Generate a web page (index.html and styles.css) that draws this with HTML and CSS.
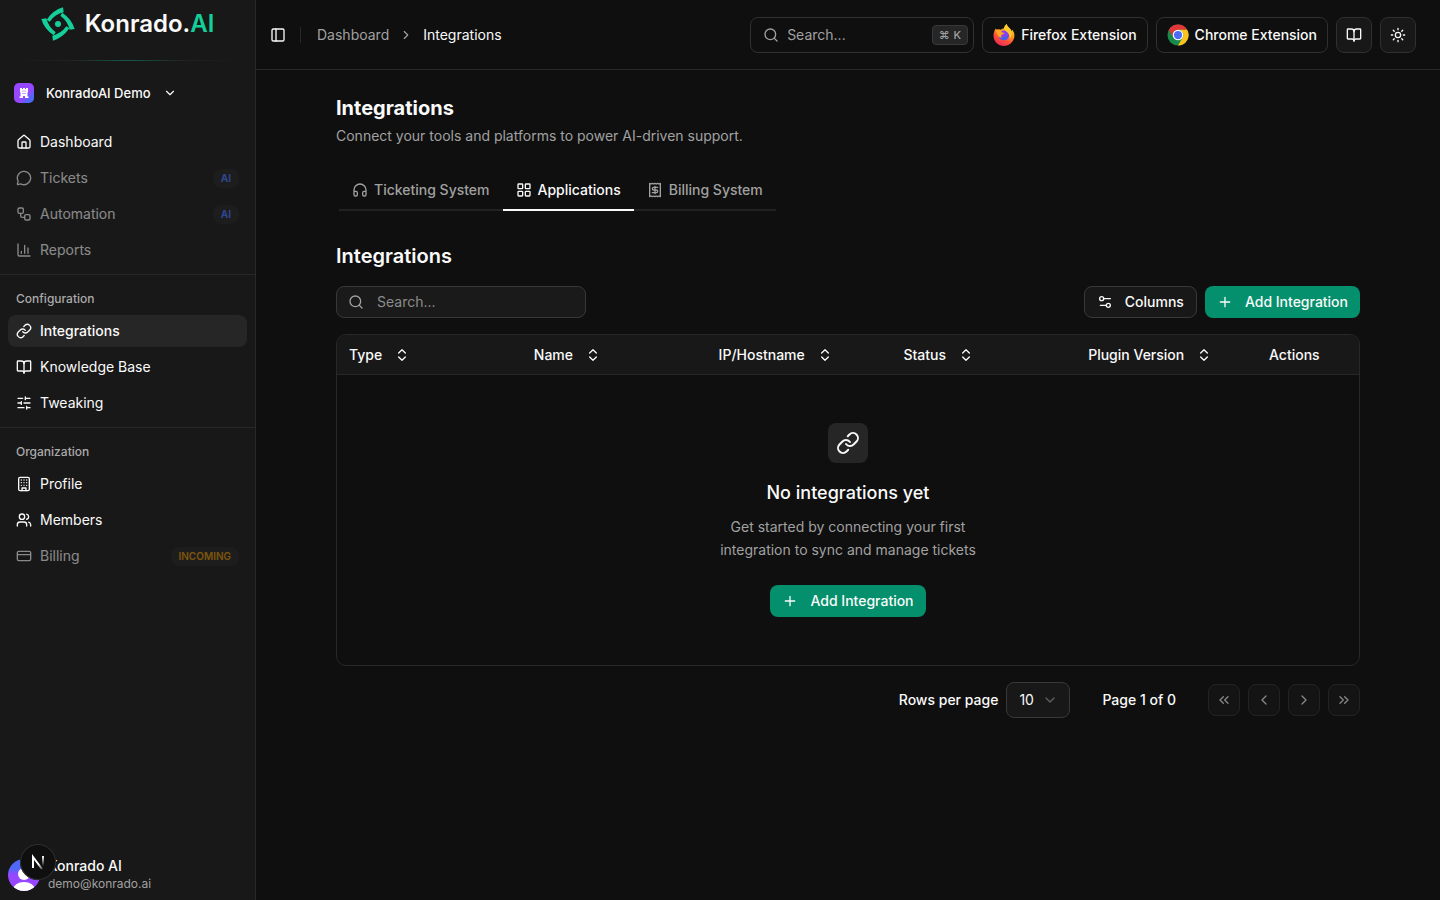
FILE: index.html
```html
<!DOCTYPE html>
<html lang="en">
<head>
<meta charset="utf-8">
<meta name="viewport" content="width=device-width, initial-scale=1">
<title>Integrations - Konrado.AI</title>
<link rel="stylesheet" href="styles.css">
</head>
<body>
<svg class="sprite" aria-hidden="true">
  <symbol id="i-link" viewBox="0 0 24 24"><path d="M10 13a5 5 0 0 0 7.54.54l3-3a5 5 0 0 0-7.07-7.07l-1.72 1.71"/><path d="M14 11a5 5 0 0 0-7.54-.54l-3 3a5 5 0 0 0 7.07 7.07l1.71-1.71"/></symbol>
  <symbol id="i-book" viewBox="0 0 24 24"><path d="M12 7v14"/><path d="M3 18a1 1 0 0 1-1-1V4a1 1 0 0 1 1-1h5a4 4 0 0 1 4 4 4 4 0 0 1 4-4h5a1 1 0 0 1 1 1v13a1 1 0 0 1-1 1h-6a3 3 0 0 0-3 3 3 3 0 0 0-3-3z"/></symbol>
  <symbol id="i-search" viewBox="0 0 24 24"><circle cx="11" cy="11" r="8"/><path d="m21 21-4.3-4.3"/></symbol>
  <symbol id="i-plus" viewBox="0 0 24 24"><path d="M5 12h14M12 5v14"/></symbol>
  <symbol id="i-sort" viewBox="0 0 24 24"><path d="m7 15 5 5 5-5M7 9l5-5 5 5"/></symbol>
  <symbol id="i-down" viewBox="0 0 24 24"><path d="m6 9 6 6 6-6"/></symbol>
  <symbol id="i-right" viewBox="0 0 24 24"><path d="m9 18 6-6-6-6"/></symbol>
  <symbol id="i-left" viewBox="0 0 24 24"><path d="m15 18-6-6 6-6"/></symbol>
</svg>
<div class="app">
  <aside class="sidebar">
    <div class="brand">
      <svg class="brand-mark" viewBox="-51 -51 102 102" aria-hidden="true">
        <g fill="#14cf9a">
          <path id="blade" d="M15-50Q-14-42-34-13L-25-7Q-9-29 17-35Z"/>
          <use href="#blade" transform="rotate(90)"/><use href="#blade" transform="rotate(180)"/><use href="#blade" transform="rotate(270)"/>
          <circle r="9"/>
        </g>
      </svg>
      <span class="brand-name">Konrado.<span>AI</span></span>
    </div>
    <div class="brand-line"></div>
    <button class="org" type="button">
      <span class="org-icon"><svg viewBox="0 0 24 24" aria-hidden="true"><path fill="#fff" fill-rule="evenodd" d="M4 2h4v2h2V2h4v2h2V2h4v8l-1 1v8h2v3h-7v-4h-4v4H3v-3h2v-8l-1-1zm5 5v2h2V7zm4 0v2h2V7zm-4 5v2h2v-2zm4 0v2h2v-2z"/></svg></span>
      <span>KonradoAI Demo</span>
      <svg class="icon s14"><use href="#i-down"/></svg>
    </button>
    <nav class="nav">
      <div class="group">
        <a class="item" href="#"><svg class="icon" viewBox="0 0 24 24"><path d="M15 21v-8a1 1 0 0 0-1-1h-4a1 1 0 0 0-1 1v8"/><path d="M3 10a2 2 0 0 1 .709-1.528l7-6a2 2 0 0 1 2.582 0l7 6A2 2 0 0 1 21 10v9a2 2 0 0 1-2 2H5a2 2 0 0 1-2-2z"/></svg>Dashboard</a>
        <a class="item off" aria-disabled="true"><svg class="icon" viewBox="0 0 24 24"><path d="M2.992 16.342a2 2 0 0 1 .094 1.167l-1.065 3.29a1 1 0 0 0 1.236 1.168l3.413-.998a2 2 0 0 1 1.099.092 10 10 0 1 0-4.777-4.719"/></svg>Tickets<span class="tag ai">AI</span></a>
        <a class="item off" aria-disabled="true"><svg class="icon" viewBox="0 0 24 24"><rect width="8" height="8" x="3" y="3" rx="2"/><path d="M7 11v4a2 2 0 0 0 2 2h4"/><rect width="8" height="8" x="13" y="13" rx="2"/></svg>Automation<span class="tag ai">AI</span></a>
        <a class="item off" aria-disabled="true"><svg class="icon" viewBox="0 0 24 24"><path d="M3 3v16a2 2 0 0 0 2 2h16M18 17V9M13 17V5M8 17v-3"/></svg>Reports</a>
      </div>
      <div class="group">
        <h2 class="group-title">Configuration</h2>
        <a class="item active" href="#" aria-current="page"><svg class="icon"><use href="#i-link"/></svg>Integrations</a>
        <a class="item" href="#"><svg class="icon"><use href="#i-book"/></svg>Knowledge Base</a>
        <a class="item" href="#"><svg class="icon" viewBox="0 0 24 24"><path d="M21 5h-7M10 5H3M21 12h-9M8 12H3M21 19h-5M12 19H3M14 3v4M8 10v4M16 17v4"/></svg>Tweaking</a>
      </div>
      <div class="group">
        <h2 class="group-title">Organization</h2>
        <a class="item" href="#"><svg class="icon" viewBox="0 0 24 24"><rect width="16" height="20" x="4" y="2" rx="2"/><path d="M9 22v-4h6v4M8 6h.01M16 6h.01M12 6h.01M12 10h.01M12 14h.01M16 10h.01M16 14h.01M8 10h.01M8 14h.01"/></svg>Profile</a>
        <a class="item" href="#"><svg class="icon" viewBox="0 0 24 24"><path d="M16 21v-2a4 4 0 0 0-4-4H6a4 4 0 0 0-4 4v2"/><path d="M16 3.128a4 4 0 0 1 0 7.744M22 21v-2a4 4 0 0 0-3-3.870"/><circle cx="9" cy="7" r="4"/></svg>Members</a>
        <a class="item off" aria-disabled="true"><svg class="icon" viewBox="0 0 24 24"><rect width="20" height="14" x="2" y="5" rx="2"/><path d="M2 10h20"/></svg>Billing<span class="tag incoming">INCOMING</span></a>
      </div>
    </nav>
    <button class="user" type="button">
      <svg class="avatar" viewBox="0 0 32 32" aria-hidden="true">
        <defs><linearGradient id="av" x1="0" y1="0" x2="0" y2="1"><stop offset=".3" stop-color="#4f68f8"/><stop offset=".5" stop-color="#9747ff"/></linearGradient><clipPath id="avc"><circle cx="16" cy="16" r="16"/></clipPath></defs>
        <g clip-path="url(#avc)"><rect width="32" height="32" fill="url(#av)"/><circle cx="16" cy="15" r="6" fill="#fff"/><ellipse cx="16" cy="31" rx="11" ry="8" fill="#fff"/></g>
      </svg>
      <span class="user-text"><span class="user-name">Konrado AI</span><span class="user-mail">demo@konrado.ai</span></span>
    </button>
  </aside>

  <div class="page">
    <header class="topbar">
      <button class="toggle" type="button" aria-label="Toggle sidebar"><svg class="icon" viewBox="0 0 24 24"><rect width="18" height="18" x="3" y="3" rx="2"/><path d="M9 3v18"/></svg></button>
      <span class="divider"></span>
      <nav class="crumbs" aria-label="Breadcrumb"><a href="#">Dashboard</a><svg class="icon s14"><use href="#i-right"/></svg><span>Integrations</span></nav>
      <div class="actions">
        <button class="outline find" type="button"><svg class="icon"><use href="#i-search"/></svg>Search...<kbd><span>⌘</span><span>K</span></kbd></button>
        <button class="outline ext" type="button">
          <svg class="logo" viewBox="0 0 24 24" aria-hidden="true">
            <defs><linearGradient id="fx" x1=".8" y1="0" x2=".3" y2="1"><stop offset="0" stop-color="#ffd83a"/><stop offset=".4" stop-color="#ff9a1f"/><stop offset=".7" stop-color="#ff4f38"/><stop offset="1" stop-color="#e8265a"/></linearGradient></defs>
            <path fill="url(#fx)" d="M3 5c.4.8.8 1 1.3 1.3C5.700 5.800 7 5.900 8.300 6.400 9.500 5.300 11 4.900 12 5 12.300 3 13.300 1.200 15 0c.2 2.700 2.500 3.600 4 5.700.6.8 1 1.500 1.200 2.300.5-.6.600-1.300.5-2C23 8.500 23.700 11 23.300 14 22.300 20 17.500 24 12 24 5.600 24 .6 19 .6 12.800.6 9.500 1.600 7.200 3 5z"/>
            <circle cx="12" cy="12.500" r="5.500" fill="#8a3ff0"/>
            <path fill="#3f63e8" d="M7 13.500l5 1 4.500-2.500c0 3.500-2 5.500-4.500 5.500s-4.500-1.500-5-4z"/>
            <path fill="#ffa51f" d="M2.600 6.300L4.500 6.300C7 5.700 9 6.500 9.500 9c1 .6 2 .7 3 .8-.5 1.500-2 1.700-3.500 2.200-.6 1 0 2 1 2.500-3 .5-5-1-5-3C4 10 3 8.500 2.600 6.300z"/>
            <path fill="#ffc928" d="M15 0c.2 2.700 2.500 3.600 4 5.700 2.500 3.700 1.500 8-1 11 .4-3 .2-5.500-1.500-7C14.500 8 12.300 7 12 5c.3-2 1.300-3.800 3-5z"/>
          </svg>Firefox Extension</button>
        <button class="outline ext" type="button">
          <svg class="logo" viewBox="0 0 48 48" aria-hidden="true">
            <circle cx="24" cy="24" r="23" fill="#188a4b"/>
            <path fill="#e3363a" d="M4 12.500A23 23 0 0 1 44 12.500H24A11.500 11.500 0 0 0 14 29.800z"/>
            <path fill="#fcc21b" d="M44 12.500A23 23 0 0 1 24 47L34 29.800A11.500 11.500 0 0 0 24 12.500z"/>
            <circle cx="24" cy="24" r="11.500" fill="#fff"/><circle cx="24" cy="24" r="9" fill="#4a6cf7"/>
          </svg>Chrome Extension</button>
        <button class="outline square" type="button" aria-label="Documentation"><svg class="icon"><use href="#i-book"/></svg></button>
        <button class="outline square" type="button" aria-label="Toggle theme"><svg class="icon" viewBox="0 0 24 24"><circle cx="12" cy="12" r="4"/><path d="M12 2v2M12 20v2m-7.070-17.070 1.410 1.410m11.320 11.320 1.410 1.410M2 12h2m16 0h2M6.340 17.660l-1.410 1.410M19.070 4.930l-1.410 1.410"/></svg></button>
      </div>
    </header>

    <main class="content">
      <h1 class="title">Integrations</h1>
      <p class="lead">Connect your tools and platforms to power AI-driven support.</p>
      <div class="tabs" role="tablist">
        <button class="tab" role="tab" type="button"><svg class="icon" viewBox="0 0 24 24"><path d="M3 14h3a2 2 0 0 1 2 2v3a2 2 0 0 1-2 2H5a2 2 0 0 1-2-2v-7a9 9 0 0 1 18 0v7a2 2 0 0 1-2 2h-1a2 2 0 0 1-2-2v-3a2 2 0 0 1 2-2h3"/></svg>Ticketing System</button>
        <button class="tab on" role="tab" type="button" aria-selected="true"><svg class="icon" viewBox="0 0 24 24"><rect width="7" height="7" x="3" y="3" rx="1"/><rect width="7" height="7" x="14" y="3" rx="1"/><rect width="7" height="7" x="14" y="14" rx="1"/><rect width="7" height="7" x="3" y="14" rx="1"/></svg>Applications</button>
        <button class="tab" role="tab" type="button"><svg class="icon" viewBox="0 0 24 24"><path d="M4 2v20l2-1 2 1 2-1 2 1 2-1 2 1 2-1 2 1V2l-2 1-2-1-2 1-2-1-2 1-2-1-2 1Z"/><path d="M16 8h-6a2 2 0 1 0 0 4h4a2 2 0 1 1 0 4H8M12 17.500v-11"/></svg>Billing System</button>
      </div>

      <h2 class="title section">Integrations</h2>
      <div class="toolbar">
        <label class="field"><svg class="icon"><use href="#i-search"/></svg><input type="text" placeholder="Search..." aria-label="Search integrations"></label>
        <button class="btn plain" type="button"><svg class="icon" viewBox="0 0 24 24"><path d="M20 7h-9M14 17H5"/><circle cx="17" cy="17" r="3"/><circle cx="7" cy="7" r="3"/></svg>Columns</button>
        <button class="btn primary" type="button"><svg class="icon"><use href="#i-plus"/></svg>Add Integration</button>
      </div>

      <div class="table-wrap">
        <table>
          <thead><tr>
            <th><button type="button">Type<svg class="icon"><use href="#i-sort"/></svg></button></th>
            <th><button type="button">Name<svg class="icon"><use href="#i-sort"/></svg></button></th>
            <th><button type="button">IP/Hostname<svg class="icon"><use href="#i-sort"/></svg></button></th>
            <th><button type="button">Status<svg class="icon"><use href="#i-sort"/></svg></button></th>
            <th><button type="button">Plugin Version<svg class="icon"><use href="#i-sort"/></svg></button></th>
            <th class="last">Actions</th>
          </tr></thead>
          <tbody><tr><td colspan="6"><div class="empty">
            <span class="empty-icon"><svg class="icon s24"><use href="#i-link"/></svg></span>
            <h3>No integrations yet</h3>
            <p>Get started by connecting your first integration to sync and manage tickets</p>
            <button class="btn primary" type="button"><svg class="icon"><use href="#i-plus"/></svg>Add Integration</button>
          </div></td></tr></tbody>
        </table>
      </div>

      <div class="pager">
        <label for="rows">Rows per page</label>
        <span class="select"><select id="rows"><option>10</option></select><svg class="icon"><use href="#i-down"/></svg></span>
        <span class="count">Page 1 of 0</span>
        <div class="steps">
          <button type="button" disabled aria-label="First page"><svg class="icon" viewBox="0 0 24 24"><path d="m11 17-5-5 5-5M18 17l-5-5 5-5"/></svg></button>
          <button type="button" disabled aria-label="Previous page"><svg class="icon"><use href="#i-left"/></svg></button>
          <button type="button" disabled aria-label="Next page"><svg class="icon"><use href="#i-right"/></svg></button>
          <button type="button" disabled aria-label="Last page"><svg class="icon" viewBox="0 0 24 24"><path d="m6 17 5-5-5-5M13 17l5-5-5-5"/></svg></button>
        </div>
      </div>
    </main>
  </div>
</div>
<button class="dev-badge" type="button" aria-label="Open developer tools">
  <svg viewBox="0 0 36 36" fill="none" aria-hidden="true"><defs><linearGradient id="n1" x1="0" y1="0" x2="1" y2="1"><stop offset=".6" stop-color="#fff"/><stop offset="1" stop-color="#fff" stop-opacity=".3"/></linearGradient><linearGradient id="n2" gradientUnits="userSpaceOnUse" x1="0" y1="12" x2="0" y2="22"><stop stop-color="#fff"/><stop offset="1" stop-color="#fff" stop-opacity="0"/></linearGradient></defs><path stroke="url(#n1)" stroke-width="2" d="M13 24V13l9 12"/><path stroke="url(#n2)" stroke-width="2" d="M23 12v10"/></svg>
</button>
</body>
</html>
```
FILE: styles.css
```css
* { box-sizing: border-box; }
body {
  margin: 0;
  background: #0f0f0f;
  color: #fafafa;
  font: 400 14px/20px Inter, "Liberation Sans", sans-serif;
}
button, input, select { font: inherit; color: inherit; }
button { border: 0; background: none; padding: 0; cursor: pointer; white-space: nowrap; }
a { color: inherit; text-decoration: none; }
h1, h2, h3, p { margin: 0; }
.sprite { position: absolute; width: 0; height: 0; }
.icon {
  width: 16px;
  height: 16px;
  flex: none;
  fill: none;
  stroke: currentColor;
  stroke-width: 2;
  stroke-linecap: round;
  stroke-linejoin: round;
}
.s14 { width: 14px; height: 14px; }
.s24 { width: 24px; height: 24px; }

.app { display: flex; min-height: 100vh; }

/* Sidebar */
.sidebar {
  width: 256px;
  flex: none;
  display: flex;
  flex-direction: column;
  background: #181818;
  border-right: 1px solid #282828;
}
.brand { display: flex; align-items: center; justify-content: center; gap: 10px; height: 48px; }
.brand-mark { width: 34px; height: 34px; }
.brand-name { font-size: 24px; line-height: 32px; font-weight: 600; }
.brand-name span { color: #14cf9a; }
.brand-line {
  height: 1px;
  margin: 12px 16px;
  background: linear-gradient(90deg, transparent, #222 25%, #14594a 50%, #222 75%, transparent);
}
.org { display: flex; align-items: center; gap: 12px; height: 40px; padding: 0 14px; font-size: 13px; font-weight: 500; }
.org-icon {
  display: grid;
  place-items: center;
  width: 20px;
  height: 20px;
  border-radius: 5px;
  background: linear-gradient(135deg, #9747ff 60%, #4f68f8 80%);
}
.org-icon svg { width: 12px; height: 12px; }
.nav { flex: 1; padding-top: 5px; }
.group { display: flex; flex-direction: column; gap: 4px; padding: 8px; }
.group + .group { border-top: 1px solid #282828; }
.group-title { padding: 0 8px; margin-bottom: -4px; font-size: 12px; line-height: 32px; font-weight: 500; color: #ababab; }
.item { display: flex; align-items: center; gap: 8px; height: 32px; padding: 0 8px; border-radius: 8px; }
.item.active { background: #262626; font-weight: 500; }
.item.off { opacity: .5; }
.tag { margin-left: auto; padding: 0 8px 1px; border-radius: 8px; background: #222; font-size: 10px; line-height: 18px; font-weight: 600; }
.tag.ai { color: #4674ff; font-weight: 700; }
.tag.incoming { color: #e09400; }
.user { display: flex; align-items: center; gap: 8px; padding: 8px 8px 7px; text-align: left; }
.avatar { width: 32px; height: 32px; }
.user-text { display: flex; flex-direction: column; }
.user-name { font-weight: 500; line-height: 18px; }
.user-mail { font-size: 12px; line-height: 18px; color: #a1a1a1; }
.dev-badge {
  position: fixed;
  left: 20px;
  bottom: 20px;
  width: 36px;
  height: 36px;
  border-radius: 50%;
  background: #0f0f0f;
  box-shadow: inset 0 0 0 1px #303030;
}
.dev-badge svg { display: block; }

/* Top bar */
.page { flex: 1; min-width: 0; }
.topbar { display: flex; align-items: center; height: 70px; padding: 0 24px 0 8px; border-bottom: 1px solid #282828; }
.toggle { display: grid; place-items: center; width: 28px; height: 28px; }
.divider { width: 1px; height: 16px; margin: 0 16px 0 8px; background: #282828; }
.crumbs { display: flex; align-items: center; gap: 10px; }
.crumbs a, .crumbs .icon { color: #a1a1a1; }
.actions { display: flex; gap: 8px; margin-left: auto; }
.outline { display: flex; align-items: center; gap: 8px; height: 36px; border: 1px solid #303030; border-radius: 8px; font-weight: 500; }
.find { width: 224px; padding: 0 5px 0 12px; font-weight: 400; color: #a1a1a1; }
kbd { display: flex; gap: 4px; margin-left: auto; padding: 0 6px; border: 1px solid #383838; border-radius: 4px; background: #262626; font: 500 11px/18px Inter, "DejaVu Sans", sans-serif; }
.ext { gap: 6px; padding: 0 10px; }
.logo { width: 22px; height: 22px; }
.square { width: 36px; justify-content: center; background: #181818; }

/* Content */
.content { max-width: 1072px; margin: 0 auto; padding: 24px; }
.title { font-size: 20px; line-height: 28px; font-weight: 700; }
.lead { margin-top: 4px; color: #a1a1a1; }
.tabs { display: flex; width: fit-content; margin: 24px 0 0 3px; }
.tab {
  display: flex;
  align-items: center;
  gap: 6px;
  height: 41px;
  padding: 1px 13px 0;
  border-bottom: 2px solid #222;
  color: #a1a1a1;
  font-weight: 500;
}
.tab.on { border-color: #fafafa; color: #fafafa; }
.section { margin-top: 31px; font-weight: 600; }
.toolbar { display: flex; gap: 8px; margin: 16px 0; }
.field {
  display: flex;
  align-items: center;
  gap: 13px;
  width: 250px;
  height: 32px;
  margin-right: auto;
  padding: 0 11px;
  border: 1px solid #383838;
  border-radius: 8px;
  background: #1a1a1a;
  color: #a1a1a1;
}
.field input { flex: 1; min-width: 0; border: 0; padding: 0; background: none; outline: 0; }
.field input::placeholder { color: #8c8c8c; opacity: 1; }
.btn { display: flex; align-items: center; gap: 12px; height: 32px; padding: 0 12px; border-radius: 8px; font-weight: 500; }
.plain { border: 1px solid #383838; background: #181818; }
.primary { background: #04906c; }

.table-wrap { border: 1px solid #282828; border-radius: 10px; overflow: hidden; }
table { width: 100%; table-layout: fixed; border-collapse: separate; border-spacing: 0; }
th { height: 40px; padding: 0 12px; background: #181818; border-bottom: 1px solid #282828; font-weight: 500; text-align: left; }
th button { display: flex; align-items: center; gap: 12px; font-weight: 500; }
th.last { width: 98px; padding: 0 8px; }
td { padding: 48px 24px; }
.empty { display: flex; flex-direction: column; align-items: center; text-align: center; }
.empty-icon { display: grid; place-items: center; width: 40px; height: 40px; border-radius: 8px; background: #262626; }
.empty h3 { margin-top: 16px; font-size: 18px; line-height: 28px; font-weight: 500; }
.empty p { max-width: 288px; margin: 8px 0 24px; line-height: 23px; color: #a1a1a1; }

/* Pagination */
.pager { display: flex; align-items: center; justify-content: flex-end; gap: 8px; margin-top: 16px; font-weight: 500; }
.select { position: relative; display: flex; align-items: center; }
.select select { appearance: none; width: 64px; height: 36px; padding: 0 12px; border: 1px solid #383838; border-radius: 8px; background: #181818; font-weight: 400; }
.select .icon { position: absolute; right: 12px; color: #606060; pointer-events: none; }
.count { margin: 0 24px; }
.steps { display: flex; gap: 8px; }
.steps button { display: grid; place-items: center; width: 32px; height: 32px; border: 1px solid #383838; border-radius: 8px; background: #1a1a1a; opacity: .5; }
```
